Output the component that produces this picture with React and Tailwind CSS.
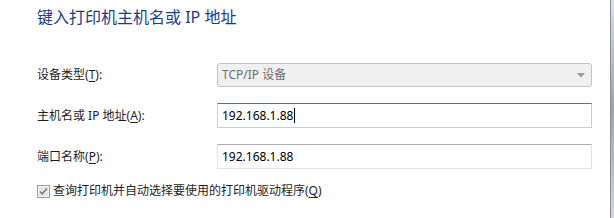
import { ChevronDown } from 'lucide-react';

const font = 'font-["Noto_Sans","Noto_Sans_CJK_SC",sans-serif]';

const Acc = ({ k }) => (
  <>
    (<span className="underline underline-offset-2">{k}</span>):
  </>
);

const Row = ({ label, children, className = '' }) => (
  <div className={`flex items-center ${className}`}>
    <div className="w-[180px] text-[12px] text-[#1e1e1e]">{label}</div>
    {children}
  </div>
);

const App = () => {
  return (
    <div className={`flex w-[614px] h-[218px] bg-white overflow-hidden ${font}`}>
      <div className="flex-1 flex flex-col pl-[37px]">
        <h1 className="mt-[8px] h-[19px] leading-[19px] text-[16px] text-[#1c3a8c] font-normal">
          键入打印机主机名或 IP 地址
        </h1>

        <Row className="mt-[36px]" label={<>设备类型<Acc k="T" /></>}>
          <div className="w-[375px] h-[24px] flex items-center justify-between rounded-[3px] border border-[#c3c3c3] bg-[#f0f0f0] pl-[4px] pr-[6px]">
            <span className="text-[12px] text-[#6d6d6d]">TCP/IP 设备</span>
            <svg width="8" height="5" viewBox="0 0 8 5">
              <path d="M0 0h8L4 4.5z" fill="#9a9a9a" />
            </svg>
          </div>
        </Row>

        <Row className="mt-[16px]" label={<>主机名或 IP 地址<Acc k="A" /></>}>
          <div className="w-[375px] h-[25px] flex items-center border border-[#b7d2ea] border-t-[#3d7bad] bg-white pl-[4px]">
            <span className="text-[12px] text-black">192.168.1.88</span>
            <span className="w-px h-[15px] bg-black ml-px" />
          </div>
        </Row>

        <Row className="mt-[16px]" label={<>端口名称<Acc k="P" /></>}>
          <div className="w-[375px] h-[25px] flex items-center border border-[#e3e3e3] border-t-[#acacac] bg-white pl-[4px]">
            <span className="text-[12px] text-black">192.168.1.88</span>
          </div>
        </Row>

        <label className="mt-[13px] flex items-center gap-[3px] text-[12px] text-[#1e1e1e]">
          <svg width="13" height="13" viewBox="0 0 13 13">
            <rect x="0.5" y="0.5" width="12" height="12" fill="#f4f4f4" stroke="#9c9c9c" />
            <rect x="2" y="2" width="9" height="9" fill="#e6e6e6" />
            <path d="M3 6.5l2.2 2.4L10 3.5" fill="none" stroke="#7a7a7a" strokeWidth="1.6" />
          </svg>
          <span>
            查询打印机并自动选择要使用的打印机驱动程序(<span className="underline underline-offset-2">Q</span>)
          </span>
        </label>
      </div>

      <div className="w-[4px] h-full border-l border-[#8d8d8d] bg-gradient-to-b from-[#d5e3f1] via-[#8ea6bd] to-[#c9dcef]" />
    </div>
  );
};

export default App;
